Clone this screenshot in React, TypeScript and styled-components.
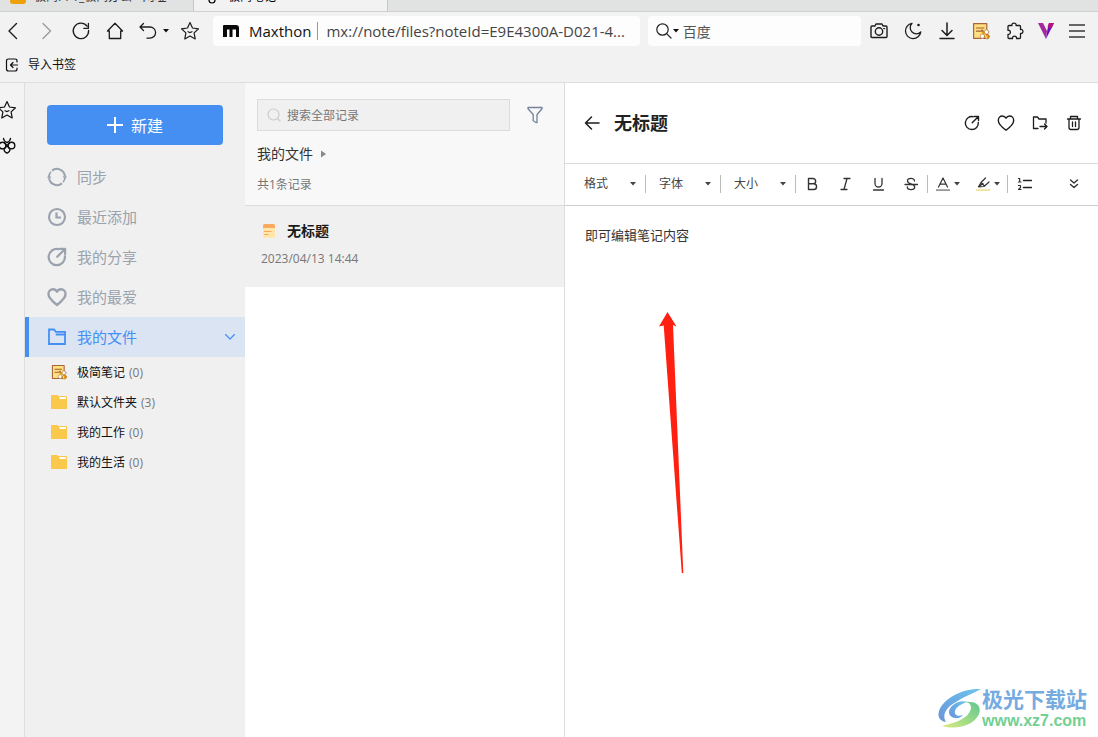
import React from 'react';
import styled, { createGlobalStyle } from 'styled-components';

const GlobalStyle = createGlobalStyle`
  *, *::before, *::after { box-sizing: border-box; }
  body {
    margin: 0;
    background: #fff;
    color: #222;
    font-family: "Open Sans", "Noto Sans", "Noto Sans CJK SC", sans-serif;
    font-size: 12px;
  }
  button, input, select, textarea { font: inherit; color: inherit; }
  ul { list-style: none; margin: 0; padding: 0; }
`;

/* ---------- icons ---------- */

const Svg = styled.svg<{ $stroke?: number }>`
  display: block;
  flex: none;
  fill: none;
  stroke: currentColor;
  stroke-width: ${(p) => p.$stroke ?? 1};
  stroke-linecap: round;
  stroke-linejoin: round;
`;

type IconProps = { size?: number; stroke?: number; children: React.ReactNode; box?: string; width?: number };
const Icon = ({ size = 20, stroke = 1.2, box, width, children }: IconProps) => (
  <Svg width={width ?? size} height={size} viewBox={box ?? `0 0 ${width ?? size} ${size}`} $stroke={stroke} aria-hidden="true">
    {children}
  </Svg>
);

const Star = () => (
  <Icon size={20}>
    <path d="M10 1.6l2.5 5.4 6 .8-4.4 4.1 1.1 6-5.2-2.9-5.2 2.9 1.1-6L1.500 7.800l6-.8z" />
    <path d="M8 10.600q2 1.800 4 0" />
  </Icon>
);
const Caret = ({ color = '#444' }: { color?: string }) => (
  <Icon size={4} width={6}>
    <path d="M0 0h6L3 3.500z" fill={color} stroke="none" />
  </Icon>
);
const NoteBee = ({ size = 18 }: { size?: number }) => (
  <Icon size={size} box="0 0 18 18" stroke={1.2}>
    <path d="M1.600 1.600h13.200v14.800H1.600z" fill="#ffdf7e" stroke="#a9653a" />
    <path d="M4.500 6h7.500M4.500 9.200h6M10 8l2.500 3" stroke="#a06036" />
    <circle cx="14.600" cy="10" r="2.200" fill="#fff" stroke="#b08a5a" strokeWidth=".8" />
    <circle cx="10.400" cy="14.200" r="2.200" fill="#fff" stroke="#b08a5a" strokeWidth=".8" />
    <circle cx="15" cy="14.600" r="2.300" fill="#f0a010" stroke="#b26a10" strokeWidth=".8" />
    <circle cx="11.300" cy="10.800" r="1.500" fill="#e89a10" stroke="none" />
    <path d="M13.400 13.200l1 3" stroke="#fff" strokeWidth=".8" />
  </Icon>
);
const Share = ({ size, stroke }: { size: number; stroke: number }) => (
  <Icon size={size} stroke={stroke} box="0 0 16 16">
    <path d="M9.200 1.700A6.500 6.500 0 1 0 14.300 7.400" />
    <path d="M8.200 7.800L14 2M10.400 1.500h4.100v4.100" />
  </Icon>
);
const Heart = ({ size, stroke }: { size: number; stroke: number }) => (
  <Icon size={size} stroke={stroke} box="0 0 18 18">
    <path d="M9 16.200C5 13.200 1.300 10.200 1.300 6.400 1.300 3.800 3.200 2 5.400 2 7 2 8.300 2.900 9 4.200 9.700 2.900 11 2 12.600 2c2.200 0 4.100 1.800 4.100 4.400 0 3.800-3.700 6.800-7.700 9.800z" />
  </Icon>
);
const Folder = () => (
  <Icon size={16}>
    <path d="M0 1.500q0-.5.5-.5H6l1.500 1H15.500q.5 0 .5.5V14.500q0 .5-.5.5H.5q-.5 0-.5-.5z" fill="#fac94c" stroke="none" />
    <path d="M8 3h7v2H9z" fill="#fff" stroke="none" />
  </Icon>
);

/* ---------- browser chrome ---------- */

const Page = styled.div`
  position: relative;
  display: flex;
  flex-direction: column;
  min-height: 100vh;
  overflow: hidden;
`;

const TabStrip = styled.div`
  display: flex;
  align-items: stretch;
  height: 12px;
  overflow: hidden;
  background: #e0e3e2;
  border-bottom: 1px solid #cfd1d0;
`;

const Tab = styled.button<{ $active?: boolean }>`
  flex: 0 0 194px;
  display: flex;
  align-items: flex-end;
  gap: 8px;
  height: 12px;
  padding: 0 10px 8px;
  border: 0;
  border-right: 1px solid #c6c8c7;
  background: ${(p) => (p.$active ? '#f2f2f2' : 'transparent')};
  color: ${(p) => (p.$active ? '#000' : '#333')};
  line-height: 14px;
  white-space: nowrap;
`;

const TabIcon = styled.span<{ $color: string }>`
  width: 16px;
  height: 16px;
  border-radius: 3px;
  background: ${(p) => p.$color};
`;

const Toolbar = styled.div`
  display: flex;
  align-items: center;
  gap: 8px;
  height: 38px;
  padding: 0 8px 0 0;
  background: #f2f2f2;
`;

const ToolButton = styled.button<{ $width?: number; $color?: string }>`
  display: flex;
  flex: none;
  align-items: center;
  justify-content: center;
  width: ${(p) => p.$width ?? 26}px;
  height: 30px;
  padding: 0;
  border: 0;
  background: none;
  color: ${(p) => p.$color ?? '#1c1c1c'};
`;

const Fields = styled.div`
  display: grid;
  flex: 1;
  grid-template-columns: minmax(0, 2fr) minmax(0, 1fr);
  gap: 8px;
  min-width: 0;
  margin: 0 -3px 0 2px;
`;

const Field = styled.div`
  display: flex;
  align-items: center;
  height: 30px;
  padding: 0 8px;
  border-radius: 4px;
  background: #fdfdfd;
`;

const SiteName = styled.span`
  margin-left: 8px;
  padding-right: 6px;
  border-right: 1px solid #999;
  color: #111;
  font-size: 15px;
  line-height: 18px;
`;

const FieldInput = styled.input<{ $size: number }>`
  flex: 1;
  min-width: 0;
  padding: 0;
  border: 0;
  outline: 0;
  background: none;
  color: #444;
  font-size: ${(p) => p.$size}px;
  text-overflow: ellipsis;

  &::placeholder { color: #555; opacity: 1; }
`;

const UrlInput = styled(FieldInput)`
  margin-left: 8px;
`;

const SearchInput = styled(FieldInput)`
  &::placeholder { color: #777; }
`;

const SearchEngine = styled.button`
  display: flex;
  align-items: center;
  gap: 1px;
  margin-right: 4px;
  padding: 0;
  border: 0;
  background: none;
`;

const BookmarkBar = styled.div`
  display: flex;
  align-items: center;
  height: 33px;
  padding: 0 5px 3px;
  border-bottom: 1px solid #dedede;
  background: #f2f2f2;
`;

const BookmarkButton = styled.button`
  display: flex;
  align-items: center;
  gap: 9px;
  padding: 0;
  border: 0;
  background: none;
  color: #111;
  line-height: 18px;
`;

/* ---------- columns ---------- */

const Main = styled.div`
  display: flex;
  flex: 1;
`;

const Rail = styled.nav`
  flex: 0 0 25px;
  display: flex;
  flex-direction: column;
  gap: 16px;
  padding: 17px 0;
  overflow: hidden;
  border-right: 1px solid #dedede;
  background: #f3f3f3;
`;

const RailButton = styled.button`
  display: flex;
  width: 20px;
  height: 20px;
  margin-left: -3px;
  padding: 0;
  border: 0;
  background: none;
  color: #111;
`;

const Sidebar = styled.aside`
  flex: 0 0 220px;
  padding-top: 22px;
  background: #f0f0f0;
`;

const NewButton = styled.button`
  display: flex;
  align-items: center;
  justify-content: center;
  gap: 8px;
  width: 176px;
  height: 40px;
  margin: 0 22px 12px;
  padding: 0;
  border: 0;
  border-radius: 4px;
  background: #458ff3;
  color: #fff;
  font-size: 16px;
`;

const NavItem = styled.button<{ $active?: boolean }>`
  display: flex;
  align-items: center;
  gap: 10px;
  width: 100%;
  height: 40px;
  padding: 0 10px 0 18px;
  border: 0;
  border-left: 4px solid ${(p) => (p.$active ? '#458ff3' : 'transparent')};
  background: ${(p) => (p.$active ? '#dae4f3' : 'transparent')};
  color: ${(p) => (p.$active ? '#458ff3' : '#9aa2ae')};
  font-size: 15px;
  text-align: left;
`;

const NavLabel = styled.span`
  flex: 1;
  padding-bottom: 2px;
`;

const FolderItem = styled.button`
  display: flex;
  align-items: center;
  width: 100%;
  height: 30px;
  padding: 0 0 0 26px;
  border: 0;
  background: none;
  color: #111;
`;

const FolderName = styled.span`
  margin-left: 10px;
`;

const Count = styled.span`
  margin-left: 4px;
  color: #777;
`;

const NoteList = styled.section`
  flex: 0 0 320px;
  border-right: 1px solid #dcdcdc;
  background: #fff;
`;

const ListHeader = styled.header`
  height: 123px;
  padding: 16px 18px 0 12px;
  border-bottom: 1px solid #dcdcdc;
  background: #f8f8f8;
`;

const SearchRow = styled.div`
  display: flex;
  align-items: center;
  gap: 14px;
`;

const SearchBox = styled.label`
  display: flex;
  flex: 1;
  align-items: center;
  gap: 6px;
  height: 32px;
  padding: 0 9px;
  border: 1px solid #dcdcdc;
  background: #f0f0f0;
  color: #ccc;
`;

const Breadcrumb = styled.button`
  display: flex;
  align-items: center;
  gap: 8px;
  margin: 13px 0 11px;
  padding: 0;
  border: 0;
  background: none;
  color: #333;
  font-size: 14px;
  line-height: 20px;
`;

const Total = styled.div`
  color: #777;
  line-height: 20px;
`;

const NoteCard = styled.article`
  height: 81px;
  padding: 15px 16px;
  background: #f0f0f0;
`;

const NoteTitle = styled.h2`
  display: flex;
  align-items: center;
  gap: 10px;
  margin: 0 0 9px;
  color: #1a1a1a;
  font-size: 14px;
  font-weight: 700;
  line-height: 20px;
`;

const NoteDate = styled.time`
  display: block;
  color: #777;
  line-height: 18px;
`;

/* ---------- editor ---------- */

const Editor = styled.section`
  display: flex;
  flex: 1;
  flex-direction: column;
  min-width: 0;
`;

const EditorHeader = styled.header`
  display: flex;
  align-items: center;
  height: 81px;
  padding: 0 11px 0 14px;
  border-bottom: 1px solid #dcdcdc;
`;

const EditorTitle = styled.h1`
  flex: 1;
  margin: 0 0 0 9px;
  font-size: 18px;
  font-weight: 700;
  line-height: 26px;
`;

const Actions = styled.div`
  display: flex;
  gap: 8px;
`;

const FormatBar = styled.div`
  display: flex;
  align-items: center;
  height: 42px;
  padding: 0 8px 1px 6px;
  border-bottom: 1px solid #cfcfcf;
`;

const Divider = styled.span`
  flex: none;
  width: 1px;
  height: 18px;
  background: #bbb;
`;

const SelectCell = styled.label`
  display: flex;
  align-items: center;
  width: 74px;
  padding: 0 9px 0 13px;
`;

const Select = styled.select`
  flex: 1;
  min-width: 0;
  padding: 0;
  border: 0;
  outline: 0;
  appearance: none;
  background: none;
  color: #444;
  line-height: 18px;
`;

const FormatButton = styled.button<{ $width?: number }>`
  display: flex;
  flex: none;
  align-items: center;
  justify-content: center;
  gap: 4px;
  width: ${(p) => p.$width ?? 33}px;
  height: 30px;
  padding: 0;
  border: 0;
  background: none;
  color: #333;
`;

const MoreButton = styled(FormatButton)`
  margin-left: auto;
`;

const NoteBody = styled.textarea`
  flex: 1;
  width: 100%;
  padding: 19px 20px;
  border: 0;
  outline: 0;
  resize: none;
  background: #fff;
  color: #333;
  font-size: 13px;
  line-height: 20px;
`;

const Pointer = styled.div`
  position: absolute;
  top: 311px;
  left: 657px;
  pointer-events: none;
`;

const Watermark = styled.div`
  position: absolute;
  right: 11px;
  bottom: 7px;
  display: flex;
  align-items: center;
  pointer-events: none;
`;

const WatermarkName = styled.div`
  color: #75abdf;
  font-size: 21px;
  font-weight: 700;
  line-height: 26px;
`;

const WatermarkSite = styled.div`
  color: #72d092;
  font-family: "Liberation Sans", sans-serif;
  font-size: 16px;
  font-weight: 700;
  line-height: 18px;
`;

const navItems = [
  {
    label: '同步',
    icon: (
      <Icon size={20} stroke={2}>
        <path d="M5 3.600A8 8 0 0 1 17.900 9.200M15 16.400A8 8 0 0 1 2.100 10.800" strokeLinecap="butt" />
        <path d="M3.900 4.800A8 8 0 0 0 2.100 9.500M16.100 15.200A8 8 0 0 0 17.900 10.500" strokeLinecap="butt" strokeWidth="1.600" />
        <path d="M0 10.800L2 7.600l2.400 3.200zM15.600 9.200L18 12.400l2-3.200z" fill="currentColor" stroke="none" />
      </Icon>
    ),
  },
  { label: '最近添加', icon: <Icon size={20} stroke={2.2}><circle cx="10" cy="10" r="8" /><path d="M9.500 5.500V10.500H14" strokeLinecap="butt" strokeLinejoin="miter" /></Icon> },
  { label: '我的分享', icon: <Share size={20} stroke={1.8} /> },
  { label: '我的最爱', icon: <Heart size={20} stroke={2.1} /> },
];

const folders = [
  { name: '极简笔记', count: 0, note: true },
  { name: '默认文件夹', count: 3 },
  { name: '我的工作', count: 0 },
  { name: '我的生活', count: 0 },
];

export default function App() {
  return (
    <Page>
      <GlobalStyle />
      <TabStrip>
        <Tab><TabIcon $color="#eda10c" />极简PPT_极简办公 - 网址</Tab>
        <Tab $active>
          <Icon size={16}><path d="M3 4l3 2M13 4l-3 2M8 15a3 3 0 0 0 3-3l2-2-5-3-5 3 2 2a3 3 0 0 0 3 3z" /></Icon>
          极简笔记
        </Tab>
      </TabStrip>

      <Toolbar>
        <ToolButton aria-label="后退"><Icon stroke={1.400}><path d="M13.500 2.500L6 10l7.500 7.500" /></Icon></ToolButton>
        <ToolButton aria-label="前进" $color="#999"><Icon stroke={1.300}><path d="M6 2.500l7.500 7.500L6 17.500" /></Icon></ToolButton>
        <ToolButton aria-label="刷新"><Icon stroke={1.300}><path d="M17.600 9.500A7.700 7.700 0 1 1 16 5.200M17.400 2.500v4.800h-4.600" /></Icon></ToolButton>
        <ToolButton aria-label="主页"><Icon stroke={1.300}><path d="M2.500 10L10 2.200l7.500 7.800H15.700v7.500H4.300V10z" /></Icon></ToolButton>
        <ToolButton aria-label="撤销" $width={33}>
          <Icon size={20} width={26} stroke={1.300}><path d="M6.500 2.500L3 6l3.500 3.500M3 6h10a5.600 5.600 0 0 1 0 11.200H10" /></Icon>
          <Caret color="#111" />
        </ToolButton>
        <ToolButton aria-label="收藏"><Star /></ToolButton>
        <Fields>
          <Field>
            <Icon size={12} width={20} box="-1 0 20 12"><path d="M3 0h11q3 0 3 3v9h-3V4.500H10.500V12H7.500V4.500H5V12H1V1q0-1 1-1z" fill="#0a0a0a" stroke="none" /><path d="M8.500 7h1.500v5H8.500z" fill="#0a0a0a" stroke="none" /></Icon>
            <SiteName>Maxthon</SiteName>
            <UrlInput $size={15} aria-label="地址" defaultValue="mx://note/files?noteId=E9E4300A-D021-4..." />
          </Field>
          <Field>
            <SearchEngine aria-label="搜索引擎">
              <Icon size={16}><circle cx="6.500" cy="6.500" r="5.700" /><path d="M10.800 10.800L15 15" /></Icon>
              <Caret color="#111" />
            </SearchEngine>
            <FieldInput $size={14} aria-label="搜索" placeholder="百度" />
          </Field>
        </Fields>
        <ToolButton aria-label="截图"><Icon stroke={1.400}><path d="M3 5h3l1-2h6l1 2h3q1 0 1 1v9.500q0 1-1 1H3q-1 0-1-1V6q0-1 1-1z" /><circle cx="10" cy="10.500" r="3.700" /><path d="M14.800 7.600h.8" /></Icon></ToolButton>
        <ToolButton aria-label="夜间模式"><Icon stroke={1.300}><path d="M9 2.300A7.700 7.700 0 1 0 17.800 11 5.600 5.600 0 0 1 9 2.300z" /><circle cx="15.500" cy="4" r="1.300" fill="currentColor" stroke="none" /></Icon></ToolButton>
        <ToolButton aria-label="下载"><Icon stroke={1.500}><path d="M10 2v12M5 9.500l5 5 5-5M3 17.500h14" /></Icon></ToolButton>
        <ToolButton aria-label="笔记"><NoteBee /></ToolButton>
        <ToolButton aria-label="扩展"><Icon stroke={1.300}><path d="M4.500 4.500H7C6.200 1.200 11.800 1.200 11 4.500h3.500q1 0 1 1V8.500c3.300-.8 3.300 4.600 0 3.800v4.200q0 1-1 1H11.500c.6-3.200-4.600-3.200-4 0H4q-1 0-1-1V13.300c3.200.6 3.200-4.600 0-4V5.500q0-1 1-1z" /></Icon></ToolButton>
        <ToolButton aria-label="VBox" $width={20}>
          <Icon size={18}>
            <path d="M1 1h5l4 8-1 8z" fill="#a32a9c" stroke="none" />
            <path d="M9 17l1.500-10L12 1h5z" fill="#6b0dc0" stroke="none" />
            <path d="M10.500 5L12 1h5l-2.500 5.500z" fill="#b8127c" stroke="none" />
          </Icon>
        </ToolButton>
        <ToolButton aria-label="菜单" $color="#666"><Icon stroke={1.800}><path d="M2 4h16M2 10h16M2 16h16" strokeLinecap="butt" /></Icon></ToolButton>
      </Toolbar>

      <BookmarkBar>
        <BookmarkButton>
          <Icon size={14}><path d="M12 4V3q0-2-2-2H3.500q-2 0-2 2v8q0 2 2 2H10q2 0 2-2v-1M12.500 7H5.500M8 4.500L5.500 7 8 9.500" /></Icon>
          导入书签
        </BookmarkButton>
      </BookmarkBar>

      <Main>
        <Rail>
          <RailButton aria-label="收藏夹"><Star /></RailButton>
          <RailButton aria-label="蜜蜂">
            <Icon stroke={1.400}>
              <path d="M6.500 2.500Q7 5.500 10 6.500M13.500 2.500Q13 5.500 10 6.500" />
              <circle cx="5.500" cy="9.500" r="3.300" />
              <circle cx="14.500" cy="9.500" r="3.300" />
              <path d="M7.500 7l5 5.500M12.500 7l-5 5.500M7.200 12.500q-.7 3 2.800 4.700 3.500-1.700 2.800-4.700" />
            </Icon>
          </RailButton>
        </Rail>

        <Sidebar>
          <NewButton>
            <Icon size={16} stroke={2}><path d="M8 0v16M0 8h16" strokeLinecap="butt" /></Icon>
            新建
          </NewButton>
          {navItems.map((item) => (
            <NavItem key={item.label}>
              {item.icon}
              <NavLabel>{item.label}</NavLabel>
            </NavItem>
          ))}
          <NavItem $active>
            <Icon size={20} stroke={1.800}><path d="M2 2.500h5l1.800 2.300H18V17H2zM9.500 7.500H18" strokeLinejoin="miter" /></Icon>
            <NavLabel>我的文件</NavLabel>
            <Icon size={6} width={10}><path d="M0.500 0.500L5 5l4.500-4.500" /></Icon>
          </NavItem>
          <ul>
            {folders.map((f) => (
              <li key={f.name}>
                <FolderItem>
                  {f.note ? <NoteBee size={16} /> : <Folder />}
                  <FolderName>{f.name}</FolderName>
                  <Count>({f.count})</Count>
                </FolderItem>
              </li>
            ))}
          </ul>
        </Sidebar>

        <NoteList>
          <ListHeader>
            <SearchRow>
              <SearchBox>
                <Icon size={14}><circle cx="6.500" cy="6.500" r="5.500" /><path d="M10.500 10.500L13 13" /></Icon>
                <SearchInput $size={12} aria-label="搜索全部记录" placeholder="搜索全部记录" />
              </SearchBox>
              <ToolButton aria-label="筛选" $width={22} $color="#74839a">
                <Icon size={18} stroke={1.300}><path d="M2 1.500h14v1.300L11 8.500v8H10L7.200 14.800V8.500L2 2.800z" /></Icon>
              </ToolButton>
            </SearchRow>
            <Breadcrumb>
              我的文件
              <Icon size={8} width={5}><path d="M0 0.500v7l5-3.500z" fill="#888" stroke="none" /></Icon>
            </Breadcrumb>
            <Total>共1条记录</Total>
          </ListHeader>
          <NoteCard>
            <NoteTitle>
              <Icon size={16}>
                <rect x="2" y="1" width="12" height="14" rx="1.500" fill="#ffe7ac" stroke="none" />
                <path d="M2 5V2.500Q2 1 3.500 1h9Q14 1 14 2.500V5z" fill="#fba961" stroke="none" />
                <path d="M3.500 8.500H10M3.500 11.500h3.500" stroke="#f8a75e" />
              </Icon>
              无标题
            </NoteTitle>
            <NoteDate>2023/04/13 14:44</NoteDate>
          </NoteCard>
        </NoteList>

        <Editor>
          <EditorHeader>
            <ToolButton aria-label="返回"><Icon size={16} stroke={1.500}><path d="M15 8H1.500M7.500 2L1.500 8l6 6" /></Icon></ToolButton>
            <EditorTitle>无标题</EditorTitle>
            <Actions>
              <ToolButton aria-label="分享"><Share size={16} stroke={1.400} /></ToolButton>
              <ToolButton aria-label="喜爱"><Heart size={18} stroke={1.400} /></ToolButton>
              <ToolButton aria-label="移动"><Icon size={16} stroke={1.300}><path d="M6 13.500H1.500V2h4l1.500 2h7v4M8 11.500h7M12.500 9l2.500 2.500-2.500 2.500" /></Icon></ToolButton>
              <ToolButton aria-label="删除"><Icon size={16} stroke={1.300}><path d="M1.500 4h13M4.500 4V1.500h7V4M3 4v8.500q0 2 2 2h6q2 0 2-2V4M6.500 7v4.500M9.500 7v4.500" /></Icon></ToolButton>
            </Actions>
          </EditorHeader>

          <FormatBar>
            {['格式', '字体', '大小'].map((label) => (
              <React.Fragment key={label}>
                <SelectCell>
                  <Select aria-label={label}><option>{label}</option></Select>
                  <Caret />
                </SelectCell>
                <Divider />
              </React.Fragment>
            ))}
            <FormatButton aria-label="加粗"><Icon size={14} stroke={1.400}><path d="M2.500 1.500h4.500a2.600 2.600 0 0 1 0 5.300h-4.500zM2.500 6.800h5.200a2.800 2.800 0 0 1 0 5.700H2.500z" /></Icon></FormatButton>
            <FormatButton aria-label="斜体"><Icon size={14} stroke={1.300}><path d="M5 1.500h6M2 12.500h6M8 1.500l-3 11" /></Icon></FormatButton>
            <FormatButton aria-label="下划线"><Icon size={14} stroke={1.300}><path d="M3 1.500V6.500a3.500 3.500 0 0 0 7 0V1.500M1.500 13h10" /></Icon></FormatButton>
            <FormatButton aria-label="删除线" $width={32}><Icon size={14} stroke={1.300}><path d="M10.500 4C10.500 0.500 3.500 0.500 3.500 4c0 3.300 7.200 2.500 7.200 6 0 3.500-7.400 3.500-7.400 0M1 7.500h12.500" /></Icon></FormatButton>
            <Divider />
            <FormatButton aria-label="文字颜色" $width={40}>
              <Icon size={14}><path d="M2.500 10L7 1l4.500 9M4 7.200h6" /><path d="M0 12.200h14v1.800H0z" fill="#999" stroke="none" /></Icon>
              <Caret />
            </FormatButton>
            <FormatButton aria-label="高亮颜色" $width={39}>
              <Icon size={14}><path d="M9.500 1L5 5.500 2.500 9.800 8 9.500 13 5M5 5.500l3.500 3.500M7 6.500L3 9.500" /><path d="M0 12.200h14v1.800H0z" fill="#f1e49a" stroke="none" /></Icon>
              <Caret />
            </FormatButton>
            <Divider />
            <FormatButton aria-label="编号列表">
              <Icon size={14}><path d="M5.500 3.500h8M5.500 10.500h8" stroke="#222" strokeWidth="1.500" /><path d="M.5 1.500h1.200V5M.5 5h2.500M.5 8.500h2v2L.5 12.500h2.500" /></Icon>
            </FormatButton>
            <MoreButton aria-label="更多"><Icon size={10} stroke={1.400}><path d="M1.500 1L5 4l3.500-3M1.500 5.500L5 8.500l3.500-3" /></Icon></MoreButton>
          </FormatBar>
          <NoteBody aria-label="笔记内容" defaultValue="即可编辑笔记内容" />
        </Editor>
      </Main>

      <Pointer>
        <Icon size={264} width={30}><path d="M10.500 1l9 14.500-3.500-1.500L26.300 262h-1.500L6.700 14.500 2 15.500z" fill="#ff2012" stroke="none" /></Icon>
      </Pointer>

      <Watermark>
        <Icon size={42} width={44}>
          <defs>
            <linearGradient id="swirlBlue" x1="1" y1="0" x2="0" y2="1"><stop offset="0" stopColor="#6cc4ee" /><stop offset="1" stopColor="#6a94d8" /></linearGradient>
            <linearGradient id="swirlGreen" x1="1" y1="0" x2="0" y2="1"><stop offset="0" stopColor="#5fc890" /><stop offset="1" stopColor="#d8ea80" /></linearGradient>
          </defs>
          <path d="M43 2C24 1 5 12 1 24c-2 7 2 10 7 11-5-8 2-16 10-20C25 10 34 7 43 2z" fill="url(#swirlBlue)" stroke="none" />
          <path d="M29 15c-8-3-18 4-18 10 0 7 11 8 14 3-5 2-9 0-8-4 1-4 6-7 12-9z" fill="url(#swirlBlue)" stroke="none" />
          <path d="M26 15c7 0 9 5 5 11-4 6-14 10-27 13 14 4 30 0 36-10 5-9-1-16-14-14z" fill="url(#swirlGreen)" stroke="none" />
        </Icon>
        <div>
          <WatermarkName>极光下载站</WatermarkName>
          <WatermarkSite>www.xz7.com</WatermarkSite>
        </div>
      </Watermark>
    </Page>
  );
}
